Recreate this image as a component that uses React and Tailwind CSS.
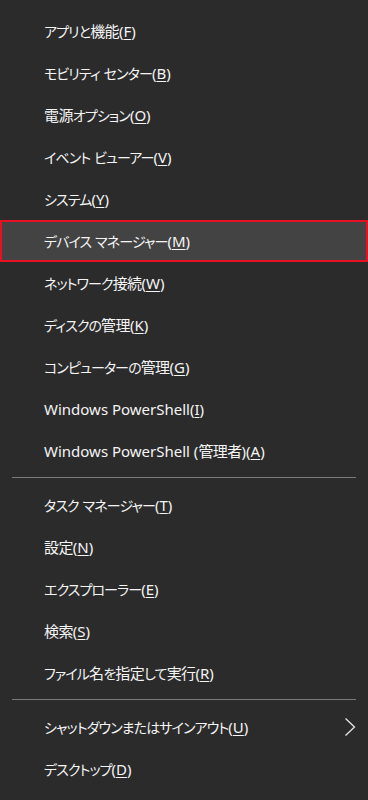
import React from "react";

const group1 = [
  ["アプリと機能(", "F", ")"],
  ["モビリティ センター(", "B", ")"],
  ["電源オプション(", "O", ")"],
  ["イベント ビューアー(", "V", ")"],
  ["システム(", "Y", ")"],
  ["デバイス マネージャー(", "M", ")", true],
  ["ネットワーク接続(", "W", ")"],
  ["ディスクの管理(", "K", ")"],
  ["コンピューターの管理(", "G", ")"],
  ["Windows PowerShell(", "I", ")"],
  ["Windows PowerShell (管理者)(", "A", ")"],
];
const group2 = [
  ["タスク マネージャー(", "T", ")"],
  ["設定(", "N", ")"],
  ["エクスプローラー(", "E", ")"],
  ["検索(", "S", ")"],
  ["ファイル名を指定して実行(", "R", ")"],
];
const group3 = [
  ["シャットダウンまたはサインアウト(", "U", ")", false, true],
  ["デスクトップ(", "D", ")"],
];

function Runs({ text }) {
  const parts = text.match(/[\u3040-\u30ff]+|[\u4e00-\u9fff]+|[^\u3040-\u30ff\u4e00-\u9fff]+/g) || [];
  return parts.map((p, i) => {
    if (/[\u3040-\u30ff]/.test(p))
      return (
        <span key={i} className="text-[14px] tracking-[-0.9px]">
          {p}
        </span>
      );
    if (/[\u4e00-\u9fff]/.test(p))
      return (
        <span key={i} className="tracking-[-0.6px]">
          {p}
        </span>
      );
    return <span key={i}>{p}</span>;
  });
}

function Item({ item }) {
  const [a, k, b, active, chevron] = item;
  return (
    <div
      className={
        "h-[42px] flex items-center pr-3 " +
        (active ? "bg-[#434343] border-2 border-[#e81123] pl-[42px]" : "pl-[44px]")
      }
    >
      <span className="flex-1 text-[15px] text-[#f4f4f4] whitespace-nowrap [font-feature-settings:'palt']">
        <Runs text={a} />
        <span className="underline underline-offset-2">{k}</span>
        {b}
      </span>
      {chevron && (
        <svg width="12" height="20" viewBox="0 0 12 20">
          <path d="M1.5 1.5 L10.5 10 L1.5 18.5" fill="none" stroke="#e6e6e6" strokeWidth="1.3" />
        </svg>
      )}
    </div>
  );
}

function Sep() {
  return <div className="mx-3 h-px bg-[#7a7a7a]" />;
}

export default function App() {
  return (
    <div
      className="w-[368px] h-[800px] bg-[#2b2b2b] overflow-hidden"
      style={{ fontFamily: '"Noto Sans", "Noto Sans CJK JP", sans-serif' }}
    >
      <div className="pt-[10px] pb-[5px]">
        {group1.map((it, i) => (
          <Item key={i} item={it} />
        ))}
      </div>
      <Sep />
      <div className="pt-[6px] pb-[5px]">
        {group2.map((it, i) => (
          <Item key={i} item={it} />
        ))}
      </div>
      <Sep />
      <div className="pt-[6px]">
        {group3.map((it, i) => (
          <Item key={i} item={it} />
        ))}
      </div>
    </div>
  );
}
